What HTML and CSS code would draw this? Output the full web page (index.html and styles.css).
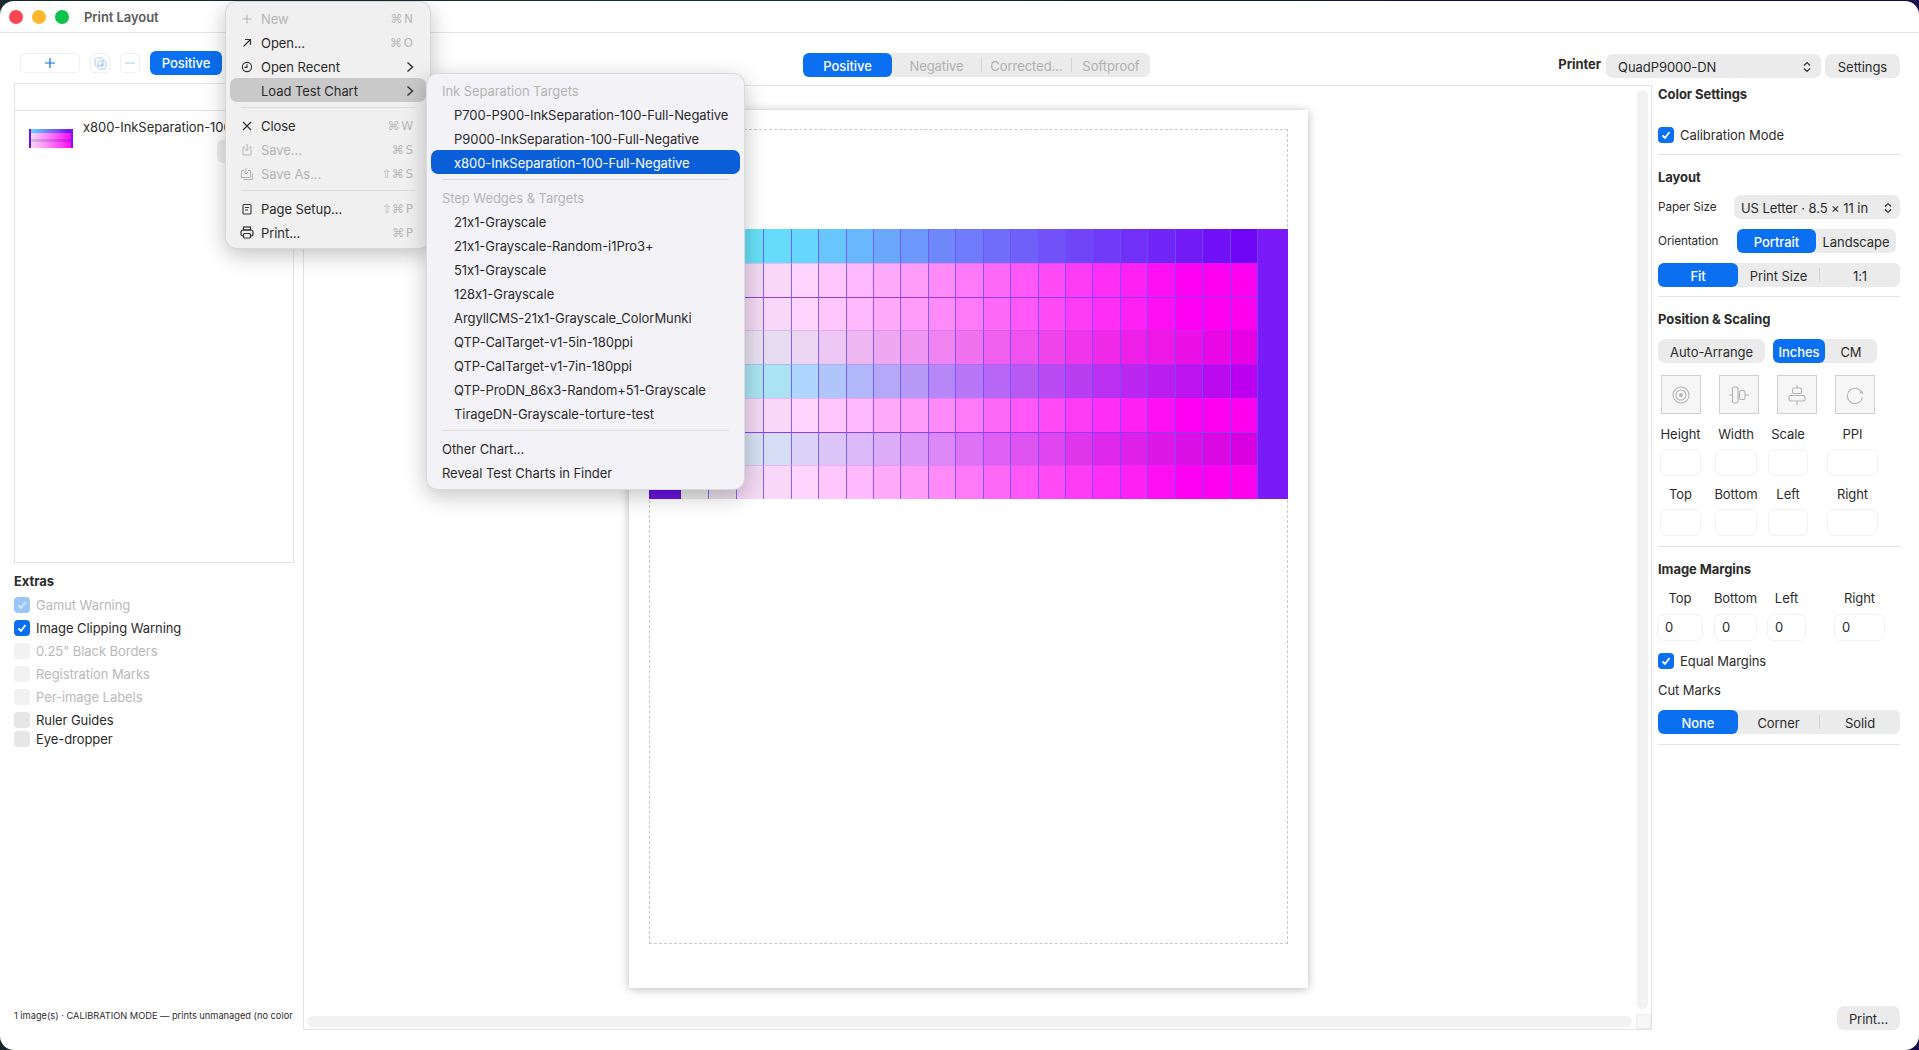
FILE: index.html
```html
<!DOCTYPE html>
<html lang="en">
<head>
  <meta charset="UTF-8">
  <title>Print Layout</title>
  <link rel="stylesheet" href="styles.css">
</head>
<body>

  <div class="window">
    <div class="titlebar">
      <span class="light red"></span>
      <span class="light yellow"></span>
      <span class="light green"></span>
      <span class="title">Print Layout</span>
    </div>

    <div class="main">
      <!-- Left column -->
      <div class="left">
        <div class="left-tools">
          <button class="tool tool-add"><svg width="12" height="12" viewBox="0 0 12 12"><path d="M6 1v10M1 6h10" stroke="#0a6ff0" stroke-width="1.2" fill="none"/></svg></button>
          <button class="tool tool-small"><svg width="13" height="13" viewBox="0 0 13 13" fill="none" stroke="#a9c8f2" stroke-width="1"><rect x="1" y="1" width="8" height="8" rx="1.5"/><rect x="4" y="4" width="8" height="8" rx="1.5"/><path d="M8 6v4M6 8h4"/></svg></button>
          <button class="tool tool-small"><svg width="12" height="12" viewBox="0 0 12 12"><path d="M1 6h10" stroke="#a9c8f2" stroke-width="1"/></svg></button>
          <button class="btn-blue">Positive</button>
        </div>

        <div class="list">
          <div class="list-head"></div>
          <div class="list-item">
            <div class="thumb"></div>
            <div class="item-body">
              <div class="item-name">x800-InkSeparation-100-Full-Negative</div>
              <div class="item-btn"></div>
            </div>
          </div>
        </div>

        <h3 class="extras-title">Extras</h3>
        <div class="check-row muted"><span class="check dim"><svg width="12" height="12" viewBox="0 0 12 12"><path d="M2.5 6.5l2.5 2.5 4.5-6" stroke="#d5e6fb" stroke-width="1.8" fill="none"/></svg></span>Gamut Warning</div>
        <div class="check-row"><span class="check on"><svg width="12" height="12" viewBox="0 0 12 12"><path d="M2.5 6.5l2.5 2.5 4.5-6" stroke="#fff" stroke-width="1.8" fill="none"/></svg></span>Image Clipping Warning</div>
        <div class="check-row muted"><span class="check faint"></span>0.25" Black Borders</div>
        <div class="check-row muted"><span class="check faint"></span>Registration Marks</div>
        <div class="check-row muted"><span class="check faint"></span>Per-image Labels</div>
        <div class="check-row"><span class="check off"></span>Ruler Guides</div>
        <div class="check-row tight"><span class="check off"></span>Eye-dropper</div>

        <div class="status">1 image(s) · CALIBRATION MODE — prints unmanaged (no color</div>
      </div>

      <!-- Center + right -->
      <div class="work">
        <div class="toolbar">
          <div class="seg seg-view">
            <span class="seg-item active view-a">Positive</span>
            <span class="seg-item disabled view-b">Negative</span>
            <span class="seg-sep"></span>
            <span class="seg-item disabled view-c">Corrected...</span>
            <span class="seg-sep"></span>
            <span class="seg-item disabled view-d">Softproof</span>
          </div>
          <div class="printer">
            <span class="printer-label">Printer</span>
            <div class="select select-printer">QuadP9000-DN
              <svg class="updown" width="8" height="12" viewBox="0 0 8 12" fill="none" stroke="#333" stroke-width="1.2"><path d="M1 4.5L4 1.5l3 3M1 7.5l3 3 3-3"/></svg>
            </div>
            <button class="btn-gray btn-settings">Settings</button>
          </div>
        </div>

        <div class="work-row">
          <div class="canvas">
            <div class="page">
              <div class="margins">
                <div class="chart" id="chart"></div>
              </div>
            </div>
            <div class="scroll-v"></div>
            <div class="scroll-h"></div>
            <div class="scroll-corner"></div>
          </div>

          <div class="panel">
            <h3 class="panel-title first">Color Settings</h3>
            <div class="check-line calib"><span class="check on"><svg width="12" height="12" viewBox="0 0 12 12"><path d="M2.5 6.5l2.5 2.5 4.5-6" stroke="#fff" stroke-width="1.8" fill="none"/></svg></span>Calibration Mode</div>
            <hr class="rule rule-a">

            <h3 class="panel-title">Layout</h3>
            <div class="opt-row first-opt">
              <span class="opt-label">Paper Size</span>
              <div class="select select-paper">US Letter · 8.5 × 11 in
                <svg class="updown" width="8" height="12" viewBox="0 0 8 12" fill="none" stroke="#333" stroke-width="1.2"><path d="M1 4.5L4 1.5l3 3M1 7.5l3 3 3-3"/></svg>
              </div>
            </div>
            <div class="opt-row">
              <span class="opt-label">Orientation</span>
              <div class="seg seg-orient">
                <span class="seg-item active orient-a">Portrait</span>
                <span class="seg-item orient-b">Landscape</span>
              </div>
            </div>
            <div class="seg seg-three opt-row">
              <span class="seg-item active">Fit</span>
              <span class="seg-item">Print Size</span>
              <span class="seg-sep"></span>
              <span class="seg-item">1:1</span>
            </div>
            <hr class="rule rule-b">

            <h3 class="panel-title">Position &amp; Scaling</h3>
            <div class="arrange-row">
              <button class="btn-gray btn-arrange">Auto-Arrange</button>
              <div class="seg seg-units">
                <span class="seg-item active units-a">Inches</span>
                <span class="seg-item units-b">CM</span>
              </div>
            </div>
            <div class="icon-row">
              <div class="icon-btn"><svg width="20" height="20" viewBox="0 0 20 20" fill="none" stroke="#b4b4b4" stroke-width="1.1"><circle cx="10" cy="10" r="8"/><circle cx="10" cy="10" r="5"/><circle cx="10" cy="10" r="2" fill="#b4b4b4" stroke="none"/></svg></div>
              <div class="icon-btn"><svg width="20" height="20" viewBox="0 0 20 20" fill="none" stroke="#b4b4b4" stroke-width="1.1"><path d="M0 10h3M16 10h4"/><rect x="3.5" y="2" width="5.5" height="16" rx="1.5"/><rect x="10.5" y="5.5" width="5.5" height="9" rx="1.5"/></svg></div>
              <div class="icon-btn"><svg width="20" height="20" viewBox="0 0 20 20" fill="none" stroke="#b4b4b4" stroke-width="1.1"><path d="M10 0v3M10 16v4"/><rect x="5.5" y="3" width="9" height="5.5" rx="1.5"/><rect x="2" y="10.5" width="16" height="5.5" rx="1.5"/></svg></div>
              <div class="icon-btn"><svg width="20" height="20" viewBox="0 0 20 20" fill="none" stroke="#b4b4b4" stroke-width="1.1"><path d="M17 8a7.6 7.6 0 1 0 .4 4.5"/><path d="M14.5 8.5h4l-1.8-3z" fill="#b4b4b4" stroke="none"/></svg></div>
            </div>

            <div class="fields fields-size">
              <div class="field w41"><span>Height</span><div class="input"></div></div>
              <div class="field w42"><span>Width</span><div class="input"></div></div>
              <div class="field w40"><span>Scale</span><div class="input"></div></div>
              <div class="field w51"><span>PPI</span><div class="input"></div></div>
            </div>
            <div class="fields fields-size second">
              <div class="field w41"><span>Top</span><div class="input"></div></div>
              <div class="field w42"><span>Bottom</span><div class="input"></div></div>
              <div class="field w40"><span>Left</span><div class="input"></div></div>
              <div class="field w51"><span>Right</span><div class="input"></div></div>
            </div>
            <hr class="rule rule-c">

            <h3 class="panel-title">Image Margins</h3>
            <div class="fields fields-margin">
              <div class="field w46"><span>Top</span><div class="input">0</div></div>
              <div class="field w43"><span>Bottom</span><div class="input">0</div></div>
              <div class="field w39"><span>Left</span><div class="input">0</div></div>
              <div class="field w51"><span>Right</span><div class="input">0</div></div>
            </div>
            <div class="check-line equal"><span class="check on"><svg width="12" height="12" viewBox="0 0 12 12"><path d="M2.5 6.5l2.5 2.5 4.5-6" stroke="#fff" stroke-width="1.8" fill="none"/></svg></span>Equal Margins</div>
            <div class="cut-label">Cut Marks</div>
            <div class="seg seg-three cut-seg">
              <span class="seg-item active">None</span>
              <span class="seg-item">Corner</span>
              <span class="seg-sep"></span>
              <span class="seg-item">Solid</span>
            </div>
            <hr class="rule rule-d">

            <button class="btn-gray btn-print">Print...</button>
          </div>
        </div>
      </div>
    </div>

    <!-- File menu -->
    <div class="menu menu-file">
      <div class="menu-row disabled">
        <span class="menu-icon"><svg width="12" height="12" viewBox="0 0 12 12"><path d="M6 1.5v9M1.5 6h9" stroke="#b5b5b5" stroke-width="1.1"/></svg></span>New<span class="keys">⌘ N</span>
      </div>
      <div class="menu-row">
        <span class="menu-icon"><svg width="12" height="12" viewBox="0 0 12 12" fill="none" stroke="#333" stroke-width="1.2"><path d="M2.5 9.5l7-7M4 2.5h5.5V8"/></svg></span>Open...<span class="keys">⌘ O</span>
      </div>
      <div class="menu-row">
        <span class="menu-icon"><svg width="12" height="12" viewBox="0 0 12 12" fill="none" stroke="#333" stroke-width="1.1"><circle cx="6" cy="6" r="4.6"/><path d="M6 3.2V6.4H3.4"/></svg></span>Open Recent
        <svg class="chev" width="8" height="12" viewBox="0 0 8 12" fill="none" stroke="#333" stroke-width="1.5"><path d="M1.5 1.5l5 4.5-5 4.5"/></svg>
      </div>
      <div class="menu-row hover">
        <span class="menu-icon"></span>Load Test Chart
        <svg class="chev" width="8" height="12" viewBox="0 0 8 12" fill="none" stroke="#333" stroke-width="1.5"><path d="M1.5 1.5l5 4.5-5 4.5"/></svg>
      </div>
      <div class="menu-sep"></div>
      <div class="menu-row">
        <span class="menu-icon"><svg width="12" height="12" viewBox="0 0 12 12"><path d="M2 2l8 8M10 2l-8 8" stroke="#333" stroke-width="1.2"/></svg></span>Close<span class="keys">⌘ W</span>
      </div>
      <div class="menu-row disabled">
        <span class="menu-icon"><svg width="12" height="13" viewBox="0 0 12 13" fill="none" stroke="#b5b5b5" stroke-width="1"><path d="M6 1v6.5M4 5.5l2 2 2-2M4 4H2v8h8V4H8"/></svg></span>Save...<span class="keys">⌘ S</span>
      </div>
      <div class="menu-row disabled">
        <span class="menu-icon"><svg width="14" height="14" viewBox="0 0 14 14" fill="none" stroke="#b5b5b5" stroke-width="1"><path d="M6 1v6M4 5l2 2 2-2M4 3.5H1.5v7h9v-7H8M3.5 12.5h9v-6"/></svg></span>Save As...<span class="keys">⇧⌘ S</span>
      </div>
      <div class="menu-sep"></div>
      <div class="menu-row">
        <span class="menu-icon"><svg width="12" height="12" viewBox="0 0 12 12" fill="none" stroke="#333" stroke-width="1.1"><rect x="2" y="1.5" width="8" height="9.5" rx="1"/><path d="M4 4.5h4M4 7h3"/></svg></span>Page Setup...<span class="keys">⇧⌘ P</span>
      </div>
      <div class="menu-row">
        <span class="menu-icon"><svg width="14" height="13" viewBox="0 0 14 13" fill="none" stroke="#333" stroke-width="1.2"><rect x="3.5" y="1" width="7" height="3"/><rect x="1" y="4" width="12" height="6" rx="2"/><rect x="3.5" y="7.5" width="7" height="4.5" rx="1" fill="#f0f0f0"/></svg></span>Print...<span class="keys">⌘ P</span>
      </div>
    </div>

    <!-- Load Test Chart submenu -->
    <div class="menu menu-charts">
      <div class="menu-row group-head">Ink Separation Targets</div>
      <div class="menu-row sub">P700-P900-InkSeparation-100-Full-Negative</div>
      <div class="menu-row sub">P9000-InkSeparation-100-Full-Negative</div>
      <div class="menu-row sub selected">x800-InkSeparation-100-Full-Negative</div>
      <div class="menu-sep"></div>
      <div class="menu-row group-head">Step Wedges &amp; Targets</div>
      <div class="menu-row sub">21x1-Grayscale</div>
      <div class="menu-row sub">21x1-Grayscale-Random-i1Pro3+</div>
      <div class="menu-row sub">51x1-Grayscale</div>
      <div class="menu-row sub">128x1-Grayscale</div>
      <div class="menu-row sub">ArgyllCMS-21x1-Grayscale_ColorMunki</div>
      <div class="menu-row sub">QTP-CalTarget-v1-5in-180ppi</div>
      <div class="menu-row sub">QTP-CalTarget-v1-7in-180ppi</div>
      <div class="menu-row sub">QTP-ProDN_86x3-Random+51-Grayscale</div>
      <div class="menu-row sub">TirageDN-Grayscale-torture-test</div>
      <div class="menu-sep"></div>
      <div class="menu-row plain">Other Chart...</div>
      <div class="menu-row plain">Reveal Test Charts in Finder</div>
    </div>
  </div>

  <script src="chart.js"></script>
</body>
</html>
```

FILE: styles.css
```css
* {
  box-sizing: border-box;
}

html, body {
  height: 100%;
}

body {
  margin: 0;
  overflow: hidden;
  font-family: Inter, "Liberation Sans", sans-serif;
  font-size: 13px;
  font-feature-settings: "calt" 0;
  letter-spacing: -0.06px;
  color: #2b2b2b;
  background: linear-gradient(90deg, #16262e 0%, #0c3436 40%, #10103f 75%, #1a0a4a 100%);
}

h3 {
  margin: 0;
  font-size: 13px;
  line-height: 16px;
  font-weight: 700;
  color: #2b2b2b;
}

button {
  font: inherit;
  letter-spacing: inherit;
  color: inherit;
  border: none;
  padding: 0;
}

.window {
  position: relative;
  height: 1049px;
  margin-top: 1px;
  background: #fff;
  border-radius: 14px;
  overflow: hidden;
}

/* Title bar */
.titlebar {
  display: flex;
  align-items: center;
  height: 32px;
  padding: 0 0 0 9px;
  border-bottom: 1px solid #e4e4e4;
}

.light {
  width: 14px;
  height: 14px;
  margin-right: 9px;
  border-radius: 50%;
}

.red { background: #fd4553; }
.yellow { background: #ffb72e; }
.green { background: #0cc24b; }

.title {
  margin-left: 6px;
  font-weight: 600;
  color: #5c5c5c;
}

.main {
  display: flex;
  height: 1017px;
}

/* Left column */
.left {
  display: flex;
  flex-direction: column;
  flex: 0 0 303px;
  width: 303px;
  min-width: 0;
  padding-left: 14px;
}

.left-tools {
  display: flex;
  align-items: center;
  height: 24px;
  margin-top: 18px;
}

.tool {
  display: flex;
  align-items: center;
  justify-content: center;
  height: 20px;
  background: #fff;
  border: 1px solid #efefef;
  border-radius: 5px;
}

.tool-add {
  width: 60px;
  margin-left: 6px;
}

.tool-small {
  width: 20px;
  margin-left: 10px;
}

.btn-blue {
  width: 72px;
  height: 24px;
  margin-left: 10px;
  background: #0a6ff0;
  border-radius: 6px;
  color: #fff;
  font-weight: 500;
}

.list {
  width: 280px;
  height: 480px;
  margin-top: 8px;
  border: 1px solid #e3e3e3;
}

.list-head {
  height: 27px;
  border-bottom: 1px solid #e3e3e3;
}

.list-item {
  display: flex;
  padding: 8px 0 0 14px;
}

.thumb {
  flex: none;
  width: 44px;
  height: 19px;
  margin-top: 10px;
  background:
    linear-gradient(90deg, #6a12e0 0, #6a12e0 2px, transparent 2px),
    linear-gradient(90deg, transparent 42px, #7a1af8 42px),
    linear-gradient(90deg, #5ce0f8, #6e88fa 40%, #7005f5) top / 100% 4px no-repeat,
    linear-gradient(90deg, rgba(150, 150, 200, .35), rgba(120, 0, 200, .35)) 0 10px / 100% 3px no-repeat,
    linear-gradient(90deg, #f5e3f5, #ff80f8 45%, #ff00ef);
}

.item-body {
  flex: none;
  width: 142px;
  margin-left: 10px;
  overflow: hidden;
}

.item-name {
  white-space: nowrap;
  line-height: 16px;
}

.item-btn {
  width: 60px;
  height: 23px;
  margin: 5px 0 0 134px;
  background: #ececec;
  border-radius: 6px;
}

.extras-title {
  margin-top: 10px;
  margin-bottom: 4px;
}

.check-row {
  display: flex;
  align-items: center;
  height: 23px;
}

.check-row.tight {
  height: 15px;
}

.check-row.muted {
  color: #b9b9b9;
}

.check {
  display: flex;
  align-items: center;
  justify-content: center;
  flex: none;
  width: 16px;
  height: 16px;
  margin-right: 6px;
  border-radius: 4px;
}

.check.on { background: #0a6ff0; }
.check.dim { background: #9cc6f8; }
.check.faint { background: #f2f2f2; }
.check.off { background: #e6e6e6; }

.status {
  margin-top: auto;
  margin-bottom: 27px;
  font-size: 9.25px;
  line-height: 14px;
  letter-spacing: 0;
  white-space: nowrap;
}

/* Center and right */
.work {
  display: flex;
  flex-direction: column;
  flex: 1;
  min-width: 0;
}

.toolbar {
  display: flex;
  flex: none;
  height: 52px;
  padding: 20px 19px 0 500px;
}

.seg {
  display: flex;
  align-items: center;
  height: 24px;
  background: #ebebeb;
  border-radius: 6px;
}

.seg-item {
  display: flex;
  align-items: center;
  justify-content: center;
  height: 24px;
  padding-top: 1px;
  border-radius: 6px;
  white-space: nowrap;
}

.seg-item.active {
  background: #0a6ff0;
  color: #fff;
  font-weight: 500;
}

.seg-item.disabled {
  color: #b0b0b0;
}

.seg-sep {
  flex: none;
  width: 1px;
  height: 14px;
  background: #d2d2d2;
}

.seg-view {
  width: 347px;
}

.view-a { width: 89px; }
.view-b { width: 89px; }
.view-c { width: 89px; }
.view-d { width: 78px; }

.printer {
  display: flex;
  margin-left: auto;
}

.printer-label {
  margin: 3px 5px 0 0;
  font-weight: 700;
  line-height: 16px;
}

.select {
  display: flex;
  align-items: center;
  height: 24px;
  padding-top: 1px;
  background: #ebebeb;
  border-radius: 7px;
  white-space: nowrap;
}

.updown {
  flex: none;
  margin-left: auto;
}

.select-printer {
  width: 215px;
  margin-top: 1px;
  padding-left: 12px;
  padding-right: 10px;
}

.btn-gray {
  display: block;
  height: 24px;
  padding-top: 1px;
  background: #ebebeb;
  border-radius: 7px;
}

.btn-settings {
  width: 75px;
  margin: 1px 0 0 4px;
}

.work-row {
  display: flex;
  flex: 1;
  min-height: 0;
}

.canvas {
  position: relative;
  flex: 0 0 1349px;
  margin-bottom: 20px;
  padding: 24px 0 0 325px;
  border: 1px solid #e4e4e4;
}

.page {
  width: 679px;
  height: 878px;
  padding: 19px 20px 0 20px;
  background: #fff;
  box-shadow: 0 1px 9px rgba(0, 0, 0, .28);
}

.margins {
  height: 815px;
  padding-top: 99px;
  border: 1px dashed #c8c8c8;
}

.chart {
  display: grid;
  grid-template-columns: 32px repeat(21, 1fr) 31px;
  grid-template-rows: repeat(8, 1fr);
  height: 270px;
  margin-left: -1px;
  margin-right: -1px;
}

.cell {
  border-left: 1px solid rgba(110, 80, 255, .85);
}

.cell.first-col {
  border-left: none;
}

.cell.line-soft {
  border-top: 1px solid rgba(150, 80, 240, .22);
}

.cell.line-hard {
  border-top: 1px solid #8f3cf0;
}

.strip-left {
  grid-column: 1;
  grid-row: 1 / span 8;
  background: #6a12e0;
}

.strip-right {
  grid-column: 23;
  grid-row: 1 / span 8;
  background: #7a1af8;
  border-left: 1px solid rgba(110, 80, 255, .85);
}

.scroll-v {
  position: absolute;
  top: 4px;
  right: 3px;
  bottom: 20px;
  width: 11px;
  background: #f2f2f2;
  border-radius: 6px;
}

.scroll-h {
  position: absolute;
  left: 3px;
  right: 19px;
  bottom: 2px;
  height: 11px;
  background: #f2f2f2;
  border-radius: 6px;
}

.scroll-corner {
  position: absolute;
  right: 0;
  bottom: 0;
  width: 15px;
  height: 15px;
  background: #f7f7f7;
  border: 1px solid #ececec;
}

/* Right panel */
.panel {
  display: flex;
  flex-direction: column;
  flex: 0 0 267px;
  width: 267px;
  min-width: 0;
  padding: 0 19px 20px 6px;
}

.panel-title {
  margin-top: 14px;
}

.panel-title.first {
  margin-top: 1px;
}

.check-line {
  display: flex;
  align-items: center;
  height: 16px;
}

.calib {
  margin-top: 25px;
}

.rule {
  flex: none;
  width: 100%;
  height: 1px;
  margin: 0;
  border: none;
  background: #e4e4e4;
}

.rule-a { margin-top: 11px; }
.rule-b { margin-top: 9px; }
.rule-c { margin-top: 10px; }
.rule-d { margin-top: 10px; }

.opt-row {
  display: flex;
  align-items: center;
  margin-top: 10px;
}

.opt-row.first-opt {
  margin-top: 10px;
}

.opt-label {
  font-size: 11.7px;
  width: 76px;
  flex: none;
}

.select-paper {
  width: 166px;
  padding-left: 7px;
  padding-right: 8px;
}

.seg-orient {
  width: 159px;
  margin-left: 3px;
}

.orient-a { width: 79px; }
.orient-b { width: 80px; }

.seg-three .seg-item {
  width: 80px;
}

.seg-three .seg-item:nth-child(2) {
  width: 81px;
}

.arrange-row {
  display: flex;
  margin-top: 12px;
}

.btn-arrange {
  width: 107px;
}

.seg-units {
  width: 104px;
  margin-left: 8px;
}

.units-a { width: 52px; }
.units-b { width: 52px; }

.icon-row {
  display: flex;
  gap: 18px;
  margin: 12px 0 0 3px;
}

.icon-btn {
  display: flex;
  align-items: center;
  justify-content: center;
  width: 40px;
  height: 39px;
  background: #f6f6f6;
  border: 1px solid #cfcfcf;
}

.fields {
  display: grid;
  justify-items: start;
}

.fields-size {
  grid-template-columns: 55px 53px 59px 51px;
  margin: 12px 0 0 2px;
}

.fields-size.second {
  margin-top: 10px;
}

.fields-margin {
  grid-template-columns: 57px 53px 67px 51px;
  margin: 13px 0 0 -1px;
}

.fields-margin .input {
  margin-top: 8px;
}

.field {
  display: flex;
  flex-direction: column;
  align-items: center;
}

.field span {
  line-height: 16px;
  white-space: nowrap;
}

.input {
  width: 100%;
  height: 27px;
  margin-top: 7px;
  padding-left: 7px;
  background: #fff;
  border: 1px solid #f0f0f0;
  border-radius: 7px;
  line-height: 25px;
}

.w39 { width: 39px; }
.w40 { width: 40px; }
.w41 { width: 41px; }
.w42 { width: 42px; }
.w43 { width: 43px; }
.w46 { width: 46px; }
.w51 { width: 51px; }

.equal {
  margin-top: 12px;
}

.cut-label {
  margin-top: 13px;
  line-height: 16px;
}

.cut-seg {
  flex: none;
  margin-top: 12px;
}

.btn-print {
  flex: none;
  width: 63px;
  margin: auto 0 0 auto;
}

/* Popup menus */
.menu {
  position: absolute;
  padding: 4px;
  border: 1px solid rgba(0, 0, 0, .1);
  border-radius: 12px;
  box-shadow: 0 6px 22px rgba(0, 0, 0, .24);
}

.menu-file {
  top: 0;
  left: 225px;
  width: 206px;
  height: 248px;
  background: #f0f0f0;
}

.menu-charts {
  top: 72px;
  left: 426px;
  width: 319px;
  height: 417px;
  background: #f3f2f7;
}

.menu-row {
  display: flex;
  align-items: center;
  height: 24px;
  padding: 1px 13px 0 9px;
  border-radius: 7px;
  white-space: nowrap;
}

.menu-row.disabled {
  color: #b5b5b5;
}

.menu-row.hover {
  background: #c9c9c9;
}

.menu-icon {
  display: flex;
  align-items: center;
  justify-content: center;
  flex: none;
  width: 22px;
  padding-right: 6px;
}

.keys {
  margin-left: auto;
  color: #b8b8b8;
  font-family: "DejaVu Sans", sans-serif;
  font-size: 12px;
  word-spacing: -2px;
}

.chev {
  flex: none;
  margin-left: auto;
  margin-right: -1px;
}

.menu-sep {
  height: 1px;
  margin: 5px 11px;
  background: #dcdcdc;
}

.menu-row.group-head {
  padding-left: 11px;
  color: #b5b5b5;
}

.menu-row.sub {
  padding-left: 23px;
}

.menu-row.plain {
  padding-left: 11px;
}

.menu-row.selected {
  background: #0a5fd8;
  color: #fff;
}
```

FILE: chart.js
```js
// colour stops per row: [column, hex]
const cyan = [[0, '#66ecf0'], [4, '#66d6fd'], [9, '#6e88fa'], [14, '#7045f8'], [20, '#7005f5']];
const pink = [[0, '#e8ebea'], [1, '#eadfea'], [2, '#f3d9f3'], [4, '#ffd5fe'], [8, '#ff9cfa'], [12, '#ff58f7'], [16, '#ff20f3'], [18, '#ff00f2'], [20, '#ff00ef']];
const soft = [[0, '#e8e8f0'], [3, '#e8dcf0'], [4, '#edd6f3'], [7, '#eea8f2'], [11, '#f060ee'], [15, '#f028e8'], [20, '#e800e4']];
const blue = [[0, '#a8ecf0'], [3, '#abe2f4'], [4, '#add5fd'], [7, '#b5a8f8'], [11, '#b866f5'], [15, '#bb30f0'], [20, '#bc00ee']];
const deep = [[0, '#d5e6f0'], [3, '#d5def5'], [4, '#dcd3f9'], [7, '#dcacf8'], [11, '#dd60f2'], [15, '#e028ea'], [20, '#d800e0']];

const rows = [cyan, pink, pink, soft, blue, pink, deep, pink];

function toRgb(hex) {
  return [1, 3, 5].map(i => parseInt(hex.substr(i, 2), 16));
}

function colorAt(stops, col) {
  for (let s = 1; s < stops.length; s++) {
    if (col <= stops[s][0]) {
      const t = (col - stops[s - 1][0]) / (stops[s][0] - stops[s - 1][0]);
      const a = toRgb(stops[s - 1][1]);
      const b = toRgb(stops[s][1]);
      return 'rgb(' + a.map((v, i) => Math.round(v + (b[i] - v) * t)).join(',') + ')';
    }
  }
  return stops[stops.length - 1][1];
}

const chart = document.getElementById('chart');

const left = document.createElement('div');
left.className = 'strip-left';
chart.appendChild(left);

rows.forEach((stops, r) => {
  for (let c = 0; c < 21; c++) {
    const cell = document.createElement('div');
    cell.className = 'cell';
    if (c === 0) cell.classList.add('first-col');
    if (r === 2 || r === 6) cell.classList.add('line-hard');
    else if (r > 0) cell.classList.add('line-soft');
    cell.style.gridColumn = c + 2;
    cell.style.gridRow = r + 1;
    cell.style.background = colorAt(stops, c);
    chart.appendChild(cell);
  }
});

const right = document.createElement('div');
right.className = 'strip-right';
chart.appendChild(right);
```
